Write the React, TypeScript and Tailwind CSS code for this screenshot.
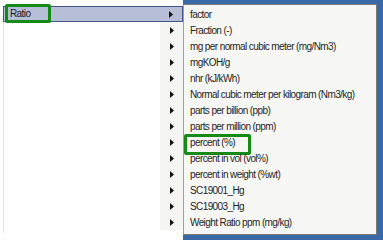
import React from "react";

const units = [
  "factor",
  "Fraction (-)",
  "mg per normal cubic meter (mg/Nm3)",
  "mgKOH/g",
  "nhr (kJ/kWh)",
  "Normal cubic meter per kilogram (Nm3/kg)",
  "parts per billion (ppb)",
  "parts per million (ppm)",
  "percent (%)",
  "percent in vol (vol%)",
  "percent in weight (%wt)",
  "SC19001_Hg",
  "SC19003_Hg",
  "Weight Ratio ppm (mg/kg)",
];

const Arrow = () => (
  <svg width="4" height="7" viewBox="0 0 4 7" className="block">
    <path d="M0 0 L4 3.5 L0 7 Z" fill="#111" />
  </svg>
);

const LeftMenu = () => (
  <div className="mt-[6px] ml-[3px] w-[180px] h-[227px] border-l border-[#e4e4e4] flex flex-col">
    {units.map((_, i) =>
      i === 0 ? (
        <div
          key={i}
          className="relative flex h-[16px] items-center bg-[#b7bed7] border border-[#44538a] -ml-px"
        >
          <span className="flex-1 pl-[6px] text-[#1a1a1a]">Ratio</span>
          <span className="w-[23px] flex justify-center">
            <Arrow />
          </span>
          <div className="absolute left-[1px] top-[-3px] w-[46px] h-[19px] border-[3px] border-[#168a16] rounded-[2px]" />
        </div>
      ) : (
        <div key={i} className="flex h-[16px] items-center">
          <span className="flex-1 bg-white h-full" />
          <span className="w-[23px] h-full flex items-center justify-center bg-[#f5f5f4]">
            <Arrow />
          </span>
        </div>
      )
    )}
  </div>
);

const SubMenu = () => (
  <div className="w-[200px] h-[240px] bg-[#3a69a8] pt-[4px] pr-[6px] pb-[5px]">
    <div className="h-full bg-[#f7f7f5] border border-[#7a7a7a] border-l-[#a0a0a0] pt-[2px] pl-[6px]">
      {units.map((u) => (
        <div key={u} className="relative flex h-[16px] items-center text-[#1f1f1f] whitespace-nowrap">
          {u}
          {u === "percent (%)" && (
            <div className="absolute left-[-6px] top-[-1px] w-[67px] h-[21px] border-[3px] border-[#168a16] rounded-[2px]" />
          )}
        </div>
      ))}
    </div>
  </div>
);

export default function App() {
  return (
    <div
      className="flex w-[383px] h-[240px] bg-white text-[10px] tracking-[-0.6px] leading-none overflow-hidden"
      style={{ fontFamily: '"Liberation Sans", Arial, sans-serif' }}
    >
      <LeftMenu />
      <SubMenu />
    </div>
  );
}
